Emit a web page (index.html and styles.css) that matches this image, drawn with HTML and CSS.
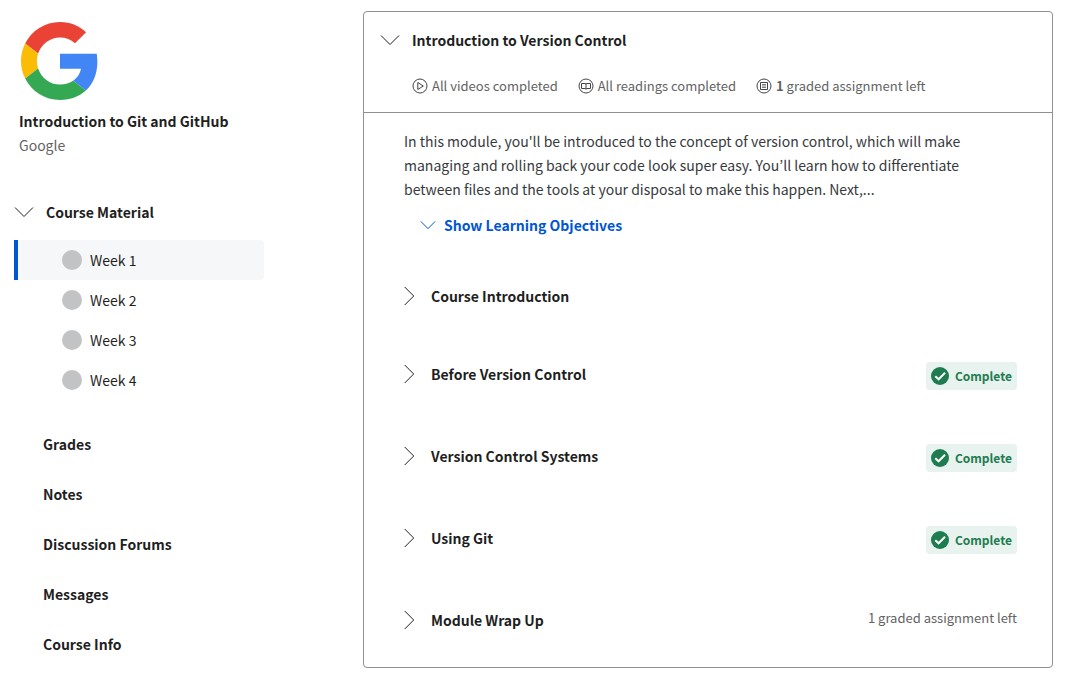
FILE: index.html
```html
<!DOCTYPE html>
<html lang="en">
<head>
<meta charset="utf-8">
<meta name="viewport" content="width=device-width, initial-scale=1">
<title>Introduction to Git and GitHub</title>
<link rel="stylesheet" href="styles.css">
</head>
<body>
<svg class="defs" aria-hidden="true">
  <symbol id="down" viewBox="0 0 20 12"><path d="M1 1.500 10 10.500 19 1.500" fill="none" stroke="currentColor" vector-effect="non-scaling-stroke"/></symbol>
  <symbol id="right" viewBox="0 0 12 20"><path d="M.7 1 9.700 10 .7 19" fill="none" stroke="currentColor"/></symbol>
  <symbol id="check" viewBox="0 0 18 18"><circle cx="9" cy="9" r="9" fill="#1d7c50"/><path d="M4.300 9.200 7.600 12.300 14 5.800" fill="none" stroke="#fff" stroke-width="2"/></symbol>
</svg>
<div class="page">
  <aside class="sidebar">
    <header class="course">
      <svg class="logo" viewBox="0 0 48 48" role="img" aria-label="Google">
        <path fill="#ea4335" d="M24 9.500c3.540 0 6.710 1.220 9.210 3.600l6.850-6.850C35.900 2.380 30.470 0 24 0 14.620 0 6.510 5.380 2.560 13.220l7.980 6.190C12.430 13.720 17.740 9.500 24 9.500z"/>
        <path fill="#4285f4" d="M46.980 24.550c0-1.570-.15-3.850-.38-5.050H24v9.320h12.940c-.58 2.960-2.260 5.480-4.780 7.380l7.730 6c4.510-4.180 7.090-10.360 7.090-17.650z"/>
        <path fill="#fbbc05" d="M10.530 28.590c-.48-1.450-.76-2.990-.76-4.590s.27-3.140.76-4.590l-7.980-6.190C.92 16.460 0 20.120 0 24c0 3.880.92 7.540 2.560 10.780l7.970-6.190z"/>
        <path fill="#34a853" d="M24 48c6.480 0 11.930-2.130 15.890-5.810l-7.730-6c-2.150 1.450-4.920 2.300-8.160 2.300-6.260 0-11.570-4.220-13.470-9.910l-7.980 6.190C6.510 42.620 14.620 48 24 48z"/>
      </svg>
      <h1 class="course-title">Introduction to Git and GitHub</h1>
      <p class="provider">Google</p>
    </header>
    <nav class="nav" aria-label="Course">
      <button class="material" type="button" aria-expanded="true"><svg class="icon-down"><use href="#down"/></svg>Course Material</button>
      <ul class="weeks">
        <li><a class="week current" href="#" aria-current="page"><span class="dot"></span>Week 1</a></li>
        <li><a class="week" href="#"><span class="dot"></span>Week 2</a></li>
        <li><a class="week" href="#"><span class="dot"></span>Week 3</a></li>
        <li><a class="week" href="#"><span class="dot"></span>Week 4</a></li>
      </ul>
      <ul class="links">
        <li><a class="link" href="#">Grades</a></li>
        <li><a class="link" href="#">Notes</a></li>
        <li><a class="link" href="#">Discussion Forums</a></li>
        <li><a class="link" href="#">Messages</a></li>
        <li><a class="link" href="#">Course Info</a></li>
      </ul>
    </nav>
  </aside>
  <main class="module">
    <header class="module-head">
      <button class="module-title" type="button" aria-expanded="true"><svg class="icon-down"><use href="#down"/></svg>Introduction to Version Control</button>
      <ul class="meta">
        <li class="meta-item">
          <svg class="icon-meta" viewBox="0 0 16 16"><circle cx="8" cy="8" r="7"/><path d="M5.800 4.500v7L11.300 8z"/></svg>
          <span>All videos completed</span>
        </li>
        <li class="meta-item">
          <svg class="icon-meta" viewBox="0 0 16 16"><circle cx="8" cy="8" r="7"/><path d="M3.500 5.500H7l1 .5 1-.5h3.500v5H9l-1 .7-1-.7H3.500zM8 5.500V11"/></svg>
          <span>All readings completed</span>
        </li>
        <li class="meta-item">
          <svg class="icon-meta" viewBox="0 0 16 16"><circle cx="8" cy="8" r="7"/><path d="M4.500 4.500h7v7h-7z"/><path d="M6 6.500h4M6 8h4M6 9.500h4" stroke-width=".7"/></svg>
          <span><strong>1</strong> graded assignment left</span>
        </li>
      </ul>
    </header>
    <div class="module-body">
      <p class="summary">In this module, you'll be introduced to the concept of version control, which will make managing and rolling back your code look super easy. You’ll learn how to differentiate between files and the tools at your disposal to make this happen. Next,...</p>
      <button class="objectives" type="button" aria-expanded="false"><svg class="icon-small"><use href="#down"/></svg>Show Learning Objectives</button>
      <ul class="lessons">
        <li class="lesson"><button class="lesson-title" type="button"><svg class="icon-right"><use href="#right"/></svg>Course Introduction</button></li>
        <li class="lesson"><button class="lesson-title" type="button"><svg class="icon-right"><use href="#right"/></svg>Before Version Control</button><span class="badge"><svg class="icon-check"><use href="#check"/></svg>Complete</span></li>
        <li class="lesson"><button class="lesson-title" type="button"><svg class="icon-right"><use href="#right"/></svg>Version Control Systems</button><span class="badge"><svg class="icon-check"><use href="#check"/></svg>Complete</span></li>
        <li class="lesson"><button class="lesson-title" type="button"><svg class="icon-right"><use href="#right"/></svg>Using Git</button><span class="badge"><svg class="icon-check"><use href="#check"/></svg>Complete</span></li>
        <li class="lesson"><button class="lesson-title" type="button"><svg class="icon-right"><use href="#right"/></svg>Module Wrap Up</button><span class="left">1 graded assignment left</span></li>
      </ul>
    </div>
  </main>
</div>
</body>
</html>
```
FILE: styles.css
```css
* { box-sizing: border-box; }

body {
  margin: 0;
  background: #fff;
  color: #1f1f1f;
  font: 14px/24px "Noto Sans CJK KR", "Noto Sans", sans-serif;
}

h1, p, ul { margin: 0; padding: 0; }
ul { list-style: none; }
a { color: inherit; text-decoration: none; }
svg { display: block; flex: none; }

button {
  display: flex;
  align-items: center;
  padding: 0;
  border: 0;
  background: none;
  color: inherit;
  font: inherit;
  font-weight: 700;
  text-align: left;
  cursor: pointer;
}

.defs { position: absolute; width: 0; height: 0; }

.page {
  display: flex;
  align-items: flex-start;
  gap: 99px;
  padding: 11px 15px 29px 14px;
}

.sidebar { flex: none; width: 250px; }
.course { padding: 11px 0 0 5px; }
.logo { width: 78px; height: 78px; margin: 0 0 9px 2px; }
.course-title { font-size: 14px; line-height: 24px; font-weight: 700; }
.provider { color: #636363; }

.nav { padding-top: 43px; }
.icon-down { width: 20px; height: 12px; }
.material { gap: 12px; }
.weeks { padding: 16px 0 19px; }

.week {
  display: flex;
  align-items: center;
  gap: 8px;
  height: 40px;
  padding-left: 44px;
  border-left: 4px solid transparent;
  border-radius: 0 4px 4px 0;
}

.week.current { border-left-color: #0056d2; background: #f5f7f8; }
.dot { width: 20px; height: 20px; border-radius: 50%; background: #c1c3c5; }
.link { display: block; padding: 13px 0 13px 29px; font-weight: 700; }

.module {
  flex: 1;
  min-width: 0;
  border: 1px solid #8c8f94;
  border-radius: 4px;
}

.module-head { padding: 16px 16px 14px; border-bottom: 1px solid #8c8f94; }
.module-title { gap: 12px; }

.meta {
  display: flex;
  flex-wrap: wrap;
  gap: 20px;
  padding: 22px 0 0 32px;
  color: #636363;
  font-size: 13px;
}

.meta-item { display: flex; align-items: center; gap: 4px; }
.icon-meta { width: 16px; height: 16px; fill: none; stroke: #444; }
.module-body { padding: 16px 35px 35px 40px; }
.summary { max-width: 590px; color: #373a3c; }
.objectives { gap: 8px; padding: 12px 0 0 16px; color: #0056d2; }
.icon-small { width: 16px; height: 10px; }

.lessons { display: grid; gap: 54px; padding-top: 47px; }

.lesson {
  display: flex;
  justify-content: space-between;
  align-items: flex-start;
}

.lesson-title { gap: 15px; }
.icon-right { width: 12px; height: 20px; }

.badge {
  display: flex;
  align-items: center;
  gap: 6px;
  height: 28px;
  padding: 0 5px;
  border-radius: 4px;
  background: #e8f2ee;
  color: #1d7c50;
  font-size: 12px;
  font-weight: 700;
}

.icon-check { width: 18px; height: 18px; }
.left { color: #636363; font-size: 13px; line-height: 20px; }
```
